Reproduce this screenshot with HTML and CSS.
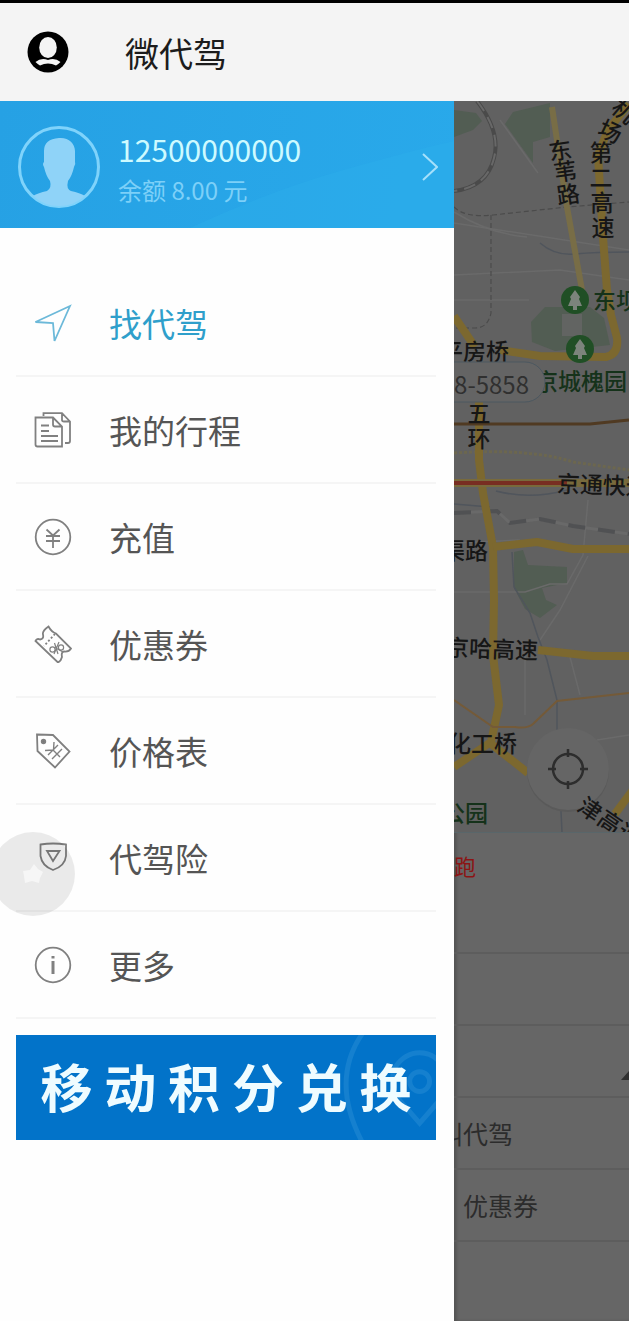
FILE: index.html
```html
<!DOCTYPE html>
<html lang="zh-CN">
<head>
<meta charset="utf-8">
<meta name="viewport" content="width=device-width, initial-scale=1">
<title>微代驾</title>
<link rel="stylesheet" href="styles.css">
</head>
<body>
<header class="topbar">
  <button class="topbar-user" type="button" aria-label="个人中心">
    <svg width="42" height="42" viewBox="0 0 42 42" aria-hidden="true">
      <circle cx="21" cy="21" r="20.5" fill="#000"/>
      <ellipse cx="21" cy="16.500" rx="8.800" ry="10.500" fill="#f4f4f4"/>
      <path d="M8.500 31Q14 26.500 21 29Q28 26.500 33.500 31Q31 33.500 29 34.500Q21 30.500 13 34.500Q11 33.500 8.500 31Z" fill="#f4f4f4"/>
    </svg>
  </button>
  <h1 class="topbar-title">微代驾</h1>
</header>
<main class="screen">
  <aside class="drawer">
    <a class="profile" href="#profile">
      <svg class="profile-wave" viewBox="0 0 454 127" preserveAspectRatio="none" aria-hidden="true">
        <path d="M190 127Q270 90 340 70T454 40V127Z" fill="#2eb0ec" opacity=".4"/>
      </svg>
      <svg class="profile-avatar" width="82" height="82" viewBox="0 0 82 82" aria-hidden="true">
        <circle cx="41" cy="41" r="39.5" fill="none" stroke="#7fd3fb" stroke-width="3"/>
        <path d="M41 12C50 11 57 17 57 25V36Q58 38 56 41Q54 50 50 55Q48 63 53 65Q62 67 67 70Q56 80 41 80T15 70Q20 67 29 65Q34 62 32 55Q28 50 26 41Q24 38 26 36V25Q26 13 41 12Z" fill="#8fd3f8"/>
      </svg>
      <span class="profile-info">
        <span class="profile-phone">12500000000</span>
        <span class="profile-balance">余额 8.00 元</span>
      </span>
      <svg width="16" height="28" viewBox="0 0 16 28" fill="none" stroke="#a5e0fb" stroke-width="2" aria-hidden="true"><path d="M1 1L15 14L1 27"/></svg>
    </a>
    <nav class="menu">
      <a class="menu-item menu-item-active" href="#find">
        <svg class="icon" viewBox="0 0 38 38"><path d="M36 2L20.500 37L19 19L1.500 18Z"/></svg>
        <span>找代驾</span>
      </a>
      <a class="menu-item" href="#trips">
        <svg class="icon" viewBox="0 0 38 38"><path d="M1.500 6.500H19L28 15.500V35.500H3.500Q1.500 35.500 1.500 33.500ZM19 6.500V13.500Q19 15.500 21 15.500H28M9.500 5V2.200H28L36 10.500V30Q36 32 34 32H31M28 2.200V9Q28 10.500 30 10.500H36M7 14.500H15M7 20H15M7 25H24M7 30H24"/></svg>
        <span>我的行程</span>
      </a>
      <a class="menu-item" href="#recharge">
        <svg class="icon" viewBox="0 0 38 38"><circle cx="19" cy="19" r="17.300"/><path d="M12.500 11.500L19 17.500L25.500 11.500M12 18H26M12 23H26M19 17.500V30"/></svg>
        <span>充值</span>
      </a>
      <a class="menu-item" href="#coupons">
        <svg class="icon" viewBox="0 0 38 38"><path d="M14.500 1.500Q17.500 7 22 8.500L37 23.500Q35 27 30 26.500Q27 27 28 32Q27 36 24 37.500L1.500 16Q3 13 6 14.500Q10 14 9 9.500Q8 6 14.500 1.500Z"/><path d="M21 9L10 21" stroke-dasharray="2 2"/><g stroke-width="1.200"><circle cx="18.500" cy="24.500" r="2.600"/><circle cx="27" cy="22.500" r="2.600"/><path d="M20.500 18L24 29M25 17L20 29M21 22.500L29 27"/></g></svg>
        <span>优惠券</span>
      </a>
      <a class="menu-item" href="#prices">
        <svg class="icon" viewBox="0 0 38 38"><path d="M3 2.500L19 3L35.500 19.500L21 35.500L3.500 19Z"/><circle cx="9.500" cy="9.500" r="1.800" fill="currentColor"/><g stroke-width="1.400"><path d="M20 10L19.500 18L11 18.500M19 18L26 25M14 23L24 13M18 27L28 17"/></g></svg>
        <span>价格表</span>
      </a>
      <a class="menu-item" href="#insurance">
        <svg class="icon" viewBox="0 0 38 38"><path d="M6.500 5.500Q19 3.500 32 5.500V17Q31 27 19 31Q8 27 6.500 17Z"/><path d="M13 12H25.500L19 22Z"/></svg>
        <span>代驾险</span>
      </a>
      <a class="menu-item" href="#more">
        <svg class="icon" viewBox="0 0 38 38"><circle cx="19" cy="19" r="17.300"/><path d="M19 10V12.500M19 15V28" stroke-width="3"/></svg>
        <span>更多</span>
      </a>
    </nav>
    <a class="banner" href="#points">
      <svg class="banner-art" viewBox="0 0 106 106" fill="none" stroke="#1580cf" stroke-width="5" aria-hidden="true">
        <path d="M34 -4Q-2 45 33 110"/>
        <path d="M90 89L70 66Q58 50 65 33Q75 18 90 18T115 33Q122 50 110 66Z"/>
        <circle cx="90" cy="47" r="10"/>
      </svg>
      <strong class="banner-text">移 动 积 分 兑 换</strong>
    </a>
    <button class="assist" type="button" aria-label="悬浮助手">
      <svg width="24" height="24" viewBox="0 0 24 24" fill="#f6f6f6" aria-hidden="true"><path d="M13 2L17 7L22 10L19 16L18 21L11 19L4 21L3 14L2 9L9 8Z"/></svg>
    </button>
  </aside>
  <section class="behind">
    <svg class="map" viewBox="454 101 175 731" preserveAspectRatio="xMinYMin slice" role="img" aria-label="地图">
      <g fill="#525d53">
        <path d="M454 110L476 113L482 121L473 130L454 137Z"/>
        <path d="M513 112L550 103V137L533 142V163L505 124Z"/>
        <path d="M531 322L545 307H590L604 318L610 345L555 351L532 342Z"/>
        <path d="M514 552L523 550L528 565L567 567V583L542 588L546 600L557 605L540 618L525 609L514 588Z"/>
      </g>
      <path d="M562 314H582V336H562Z" fill="#626462"/>
      <g fill="none" stroke="#6a6a6a" stroke-width="1.500">
        <path d="M500 120L538 173M454 212Q490 234 527 237M454 275L560 270L629 280M454 592H525L550 584H567L583 555L588 500M588 556L560 610L540 640M570 657L580 695M454 543L520 540M525 655V715M597 740L629 735"/>
        <path d="M454 223L629 250M454 300H529"/>
      </g>
      <g fill="none" stroke="#4b4b4b" stroke-width="1.200">
        <path d="M454 207Q465 218 493 215L567 207L629 202" stroke-dasharray="5 3"/>
        <path d="M491 215V313Q488 328 475 328H454" stroke-dasharray="5 3"/>
      </g>
      <path d="M477 101Q501 132 494 158Q487 187 454 191" fill="none" stroke="#4a4a4a" stroke-width="4"/>
      <path d="M477 101Q501 132 494 158Q487 187 454 191" fill="none" stroke="#686868" stroke-width="2" stroke-dasharray="12 7"/>
      <g fill="none" stroke="#50555c" stroke-width="1.500">
        <path d="M540 243Q555 256 575 254T629 252"/>
        <path d="M454 504L490 507M496 491Q530 500 567 490M512 552L514 587L530 613L538 637L547 660L557 700V730L562 832"/>
      </g>
      <path d="M454 513L497 511L510 523L540 519L573 526L629 534" fill="none" stroke="#696969" stroke-width="3"/>
      <path d="M454 513L497 511L510 523L540 519L573 526L629 534" fill="none" stroke="#505153" stroke-width="4" stroke-dasharray="17 13"/>
      <path d="M454 453Q530 448 573 462L629 470" fill="none" stroke="#6c674f" stroke-width="3" stroke-dasharray="3 2"/>
      <path d="M552 107L567 207L582 290" fill="none" stroke="#786d46" stroke-width="6"/>
      <g fill="none" stroke="#7c682f" stroke-width="8" stroke-linejoin="round">
        <path d="M629 104L608 130L598 155L603 237L607 290L611 315L617 338Q619 354 606 357L540 356L500 350"/>
        <path d="M454 316L475 347"/>
        <path d="M479 392V460L483 493L493 547L494 600L493 655L499 705L491 742L454 767"/>
        <path d="M493 547L537 542L573 549H629"/>
        <path d="M538 650L593 656H629M490 743L528 773"/>
        <path d="M635 787L615 814"/>
      </g>
      <path d="M454 483H629" stroke="#786a3c" stroke-width="8"/>
      <path d="M454 483H567" stroke="#782e22" stroke-width="4"/>
      <path d="M454 424H590L629 420" fill="none" stroke="#503a22" stroke-width="3"/>
      <path d="M454 700L493 727H515Q527 729 533 724L557 701L629 693" fill="none" stroke="#745a38" stroke-width="2"/>
      <circle cx="568" cy="771" r="41" fill="#5a5a5a"/>
      <circle cx="568" cy="769" r="41" fill="#656565"/>
      <g fill="none" stroke="#2d2d2d" stroke-width="2.500">
        <circle cx="568" cy="769" r="15"/>
        <path d="M568 749V757M568 781V789M548 769H556M580 769H588"/>
      </g>
      <g class="map-label">
        <text transform="translate(560 149) rotate(-8)">东</text>
        <text transform="translate(565 170) rotate(-8)">苇</text>
        <text transform="translate(568 193) rotate(-8)">路</text>
        <text transform="translate(625 110) rotate(40)">机</text>
        <text transform="translate(611 130) rotate(25)">场</text>
        <text x="601" y="151">第</text>
        <text x="601" y="176">二</text>
        <text x="602" y="201">高</text>
        <text x="603" y="226">速</text>
        <text x="479" y="412">五</text>
        <text x="479" y="437">环</text>
        <text transform="translate(591 808) rotate(35)">津</text>
        <text transform="translate(611 821) rotate(35)">高</text>
        <text transform="translate(630 834) rotate(35)">速</text>
      </g>
      <g class="map-label map-label-end">
        <text x="509" y="350">平房桥</text>
        <text x="488" y="549">渠路</text>
        <text transform="translate(538 649) rotate(2)">京哈高速</text>
        <text x="517" y="742">化工桥</text>
        <text class="map-park" x="488" y="812">公园</text>
      </g>
      <g class="map-label map-label-start">
        <text transform="translate(557 482) rotate(2)">京通快速</text>
        <text class="map-park" x="593" y="299">东坝</text>
        <text class="map-park" x="535" y="380">京城槐园</text>
      </g>
      <g>
        <circle cx="575" cy="300" r="14" fill="#204f25"/>
        <circle cx="580" cy="349" r="14" fill="#204f25"/>
        <path d="M575 290L580 297L579 299L582 306H577V310H573V306H568L571 299L570 297ZM580 339L585 346L584 348L587 355H582V359H578V355H573L576 348L575 346Z" fill="#7c847c"/>
      </g>
      <rect x="400" y="362" width="145" height="40" rx="20" fill="#646464" stroke="#4c5860"/>
      <text class="map-phone" x="529" y="383">8-5858</text>
    </svg>
    <div class="row row-promo"><span class="promo">跑</span></div>
    <div class="row"></div>
    <div class="row row-toggle"><svg width="8" height="9" viewBox="0 0 8 9" aria-hidden="true"><path d="M0 9L8 0V9Z" fill="#303030"/></svg></div>
    <div class="row row-call"><span>叫代驾</span></div>
    <div class="row row-coupon"><span>优惠券</span></div>
  </section>
</main>
</body>
</html>
```

FILE: styles.css
```css
* { box-sizing: border-box; }

body {
  margin: 0;
  min-height: 100vh;
  display: flex;
  flex-direction: column;
  background: #fff;
  font-family: "Noto Sans CJK SC", "Noto Sans", sans-serif;
}

a { color: inherit; text-decoration: none; }

button {
  padding: 0;
  border: 0;
  background: none;
  display: grid;
  place-items: center;
}

.topbar {
  height: 101px;
  display: flex;
  align-items: center;
  gap: 56px;
  padding: 0 27px;
  background: #f4f4f4;
  border-top: 3px solid #000;
}

.topbar-title {
  margin: 0;
  font-size: 34px;
  font-weight: 400;
  color: #1c1c1c;
}

.screen {
  flex: 1;
  display: grid;
  grid-template-columns: minmax(0, 454fr) minmax(0, 175fr);
}

.drawer {
  position: relative;
  background: #fefefe;
}

.profile {
  position: relative;
  display: flex;
  align-items: center;
  gap: 18px;
  height: 127px;
  padding: 5px 16px 0 18px;
  background: linear-gradient(100deg, #26a1e4, #29a9ea);
  color: #cdfaff;
}

.profile > * { position: relative; }

.profile .profile-wave {
  position: absolute;
  inset: 0;
  width: 100%;
  height: 100%;
}

.profile-info {
  flex: 1;
  display: flex;
  flex-direction: column;
  padding-top: 4px;
}

.profile-phone { font-size: 30px; line-height: 42px; }
.profile-balance { font-size: 24px; line-height: 40px; color: #7dd0f8; }

.menu { padding: 42px 18px 0 16px; }

.menu-item {
  display: flex;
  align-items: center;
  gap: 37px;
  height: 107px;
  padding-left: 18px;
  border-bottom: 2px solid #f5f5f5;
  color: #555;
  font-size: 33px;
}

.menu-item-active { color: #2f9fcb; }

.icon {
  width: 38px;
  height: 38px;
  fill: none;
  stroke: #808080;
  stroke-width: 1.8px;
  color: #777;
}

.menu-item-active .icon { stroke: #6cb9d9; }

.banner {
  position: relative;
  display: flex;
  align-items: center;
  justify-content: center;
  height: 105px;
  margin: 16px 18px 0 16px;
  background: #0273c9;
  overflow: hidden;
}

.banner-art {
  position: absolute;
  top: 0;
  right: 0;
  height: 100%;
  width: 106px;
}

.banner-text {
  position: relative;
  color: #effcff;
  font-size: 52px;
  font-weight: 700;
  line-height: 100px;
  padding-bottom: 4px;
  white-space: nowrap;
}

.assist {
  position: absolute;
  left: -9px;
  top: 731px;
  width: 84px;
  height: 84px;
  border-radius: 50%;
  background: rgba(0, 0, 0, 0.08);
}

.behind {
  overflow: hidden;
  background: #666;
  color: #2c2c2c;
  font-size: 25px;
  box-shadow: inset 3px 0 3px #555;
}

.map {
  display: block;
  width: 100%;
  background: #616161;
  border-bottom: 1px solid #59666a;
}

.map-label {
  font-size: 23px;
  font-weight: 500;
  fill: #161616;
  text-anchor: middle;
  dominant-baseline: central;
}

.map-label-end { text-anchor: end; }
.map-label-start { text-anchor: start; }
.map-park { fill: #15321a; }

.map-phone {
  font-size: 24px;
  fill: #303030;
  text-anchor: end;
  dominant-baseline: central;
}

.row {
  height: 72px;
  display: flex;
  align-items: center;
  border-bottom: 2px solid #5d5d5d;
  white-space: nowrap;
}

.row-promo { height: 121px; align-items: flex-start; padding-top: 16px; }
.promo { color: #8c1414; font-size: 22px; }
.row-toggle { justify-content: flex-end; padding-top: 28px; }
.row-call span { margin-left: -16px; }
.row-coupon { padding-left: 9px; }
```
